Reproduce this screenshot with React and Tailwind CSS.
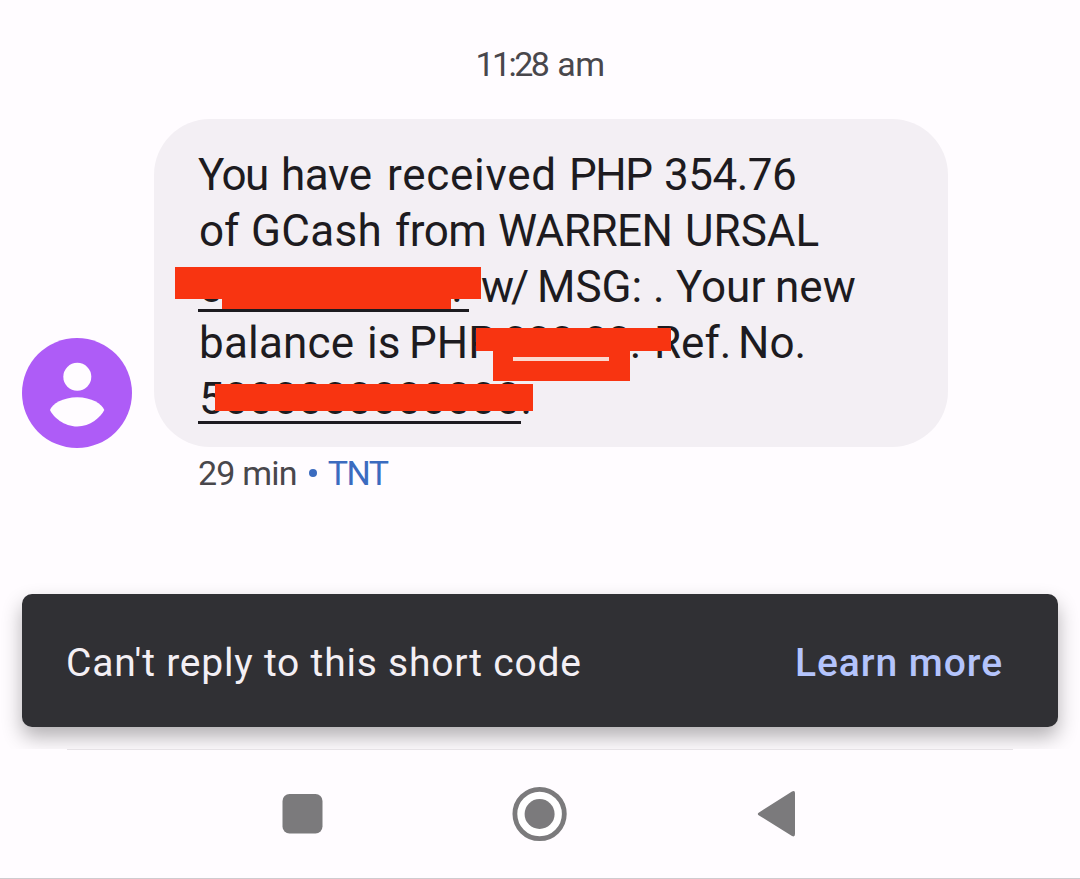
const lines = [
  [
    { text: "You", className: "w-[82px] tracking-[-1.6px] -ml-px mr-px" },
    { text: "have", className: "w-[106px] tracking-[-0.4px]" },
    { text: "received", className: "w-[182px] tracking-[0.7px]" },
    { text: "PHP", className: "w-[95px] tracking-[-1.4px]" },
    { text: "354.76", className: "tracking-[-0.5px]" },
  ],
  [
    { text: "of", className: "w-[52px]" },
    { text: "GCash", className: "w-[144px] tracking-[0.3px]" },
    { text: "from", className: "w-[103px] tracking-[-0.5px]" },
    { text: "WARREN", className: "w-[187px] tracking-[-0.5px]" },
    { text: "URSAL", className: "" },
  ],
  [
    { text: "00000000000.", className: "w-[282px] tracking-[-1.8px]" },
    { text: "w/", className: "w-[56px] tracking-[-3px]" },
    { text: "MSG:", className: "w-[116px]" },
    { text: ".", className: "w-[23px]" },
    { text: "Your", className: "w-[99px]" },
    { text: "new", className: "" },
  ],
  [
    { text: "balance", className: "w-[168px] tracking-[0.2px]" },
    { text: "is", className: "w-[42px]" },
    { text: "PHP", className: "w-[94px]" },
    { text: "000.00.", className: "w-[151px] tracking-[-1.4px]" },
    { text: "Ref.", className: "w-[84px]" },
    { text: "No.", className: "" },
  ],
  [{ text: "5000000000000.", className: "" }],
];

const Avatar = () => (
  <svg className="size-[110px] shrink-0 -mb-px" viewBox="0 0 110 110">
    <circle cx="55" cy="55" r="55" fill="#ae5cf7" />
    <circle cx="55.3" cy="38.8" r="14" fill="#fffcff" />
    <path
      d="M28 72C30 66 41 59.3 55.2 59.3C69.500 59.3 80 66 82.300 72C79 79 68 88.500 55.200 88.500C42 88.500 31 79 28 72Z"
      fill="#fffcff"
    />
  </svg>
);

const Message = () => (
  <div className="relative w-[794px] h-[328px] rounded-[56px] bg-[#f3eff4] pt-7 pl-[45px] text-[44px] leading-[56px] text-[#1d1b20]">
    {lines.map((words, i) => (
      <div key={i} className="flex h-14 whitespace-nowrap">
        {words.map((word, j) => (
          <span key={j} className={`shrink-0 ${word.className}`}>
            {word.text}
          </span>
        ))}
      </div>
    ))}
    {/* link underlines */}
    <div className="absolute left-[44px] top-[190px] w-[271px] h-[3px] bg-[#1d1b20]" />
    <div className="absolute left-[44px] top-[302px] w-[323px] h-[3px] bg-[#1d1b20]" />
    {/* redaction strokes */}
    <div className="absolute left-[21px] top-[148px] w-[306px] h-[32px] bg-[#f83411]" />
    <div className="absolute left-[68px] top-[178px] w-[229px] h-[12px] bg-[#f83411]" />
    <div className="absolute left-[322px] top-[209px] w-[195px] h-[23px] bg-[#f83411]" />
    <div className="absolute left-[339px] top-[231px] w-[137px] h-[31px] bg-[#f83411]" />
    <div className="absolute left-[359px] top-[238px] w-[96px] h-[4px] bg-[#fbd9d0]" />
    <div className="absolute left-[61px] top-[265px] w-[318px] h-[27px] bg-[#f83411]" />
  </div>
);

const Snackbar = () => (
  <div className="h-[183px] overflow-hidden px-[22px] pt-[28px]">
    <div className="h-[133px] rounded-[10px] bg-[#303034] px-11 pt-1.5 flex items-center justify-between shadow-[0_10px_20px_0_rgba(0,0,0,0.3)]">
      <span className="text-[39px] tracking-[0.79px] text-[#f3eff4]">
        Can't reply to this short code
      </span>
      <span className="mr-[11px] text-[39px] font-medium tracking-[0.95px] text-[#b4c4fc]">
        Learn more
      </span>
    </div>
  </div>
);

const NavigationBar = () => (
  <div className="h-[130px] border-b border-[#cfcbcf]">
    <svg className="w-full h-full" viewBox="0 0 1080 129">
      <path d="M67 0.500H1013" stroke="#e6e2e6" />
      <rect x="282.5" y="45" width="40" height="39.500" rx="7" fill="#7b7a7c" />
      <circle cx="539.6" cy="65" r="24.700" fill="#ffffff" stroke="#7b7a7c" strokeWidth="4.8" />
      <circle cx="539.6" cy="65" r="15" fill="#7b7a7c" />
      <path
        d="M759 63.500L792 42.500Q795 41 795 44V85Q795 88.500 792 87L759 66.500Q756.500 65 759 63.500Z"
        fill="#7b7a7c"
      />
    </svg>
  </div>
);

export default function App() {
  return (
    <div className="w-[1080px] h-[879px] overflow-hidden bg-[#fffcff] font-['Roboto',sans-serif] flex flex-col">
      <div className="h-[566px] shrink-0">
        <div className="h-[119px] pt-10 flex justify-center gap-2.5 text-[34px] leading-[48px] text-[#49474c]">
          <span className="tracking-[-2.6px]">11:28</span>
          <span className="tracking-[-0.5px]">am</span>
        </div>
        <div className="flex items-end gap-[22px] pl-[22px]">
          <Avatar />
          <Message />
        </div>
        <div className="flex items-center pl-[198px] pt-1 text-[34px] leading-[44px] text-[#49474c]">
          <span className="tracking-[-0.8px]">29 min</span>
          <span className="ml-3 mr-[11px] size-2 rounded-full bg-[#3b6bbf]" />
          <span className="tracking-[-1.5px] text-[#3b6bbf]">TNT</span>
        </div>
      </div>
      <Snackbar />
      <NavigationBar />
    </div>
  );
}
